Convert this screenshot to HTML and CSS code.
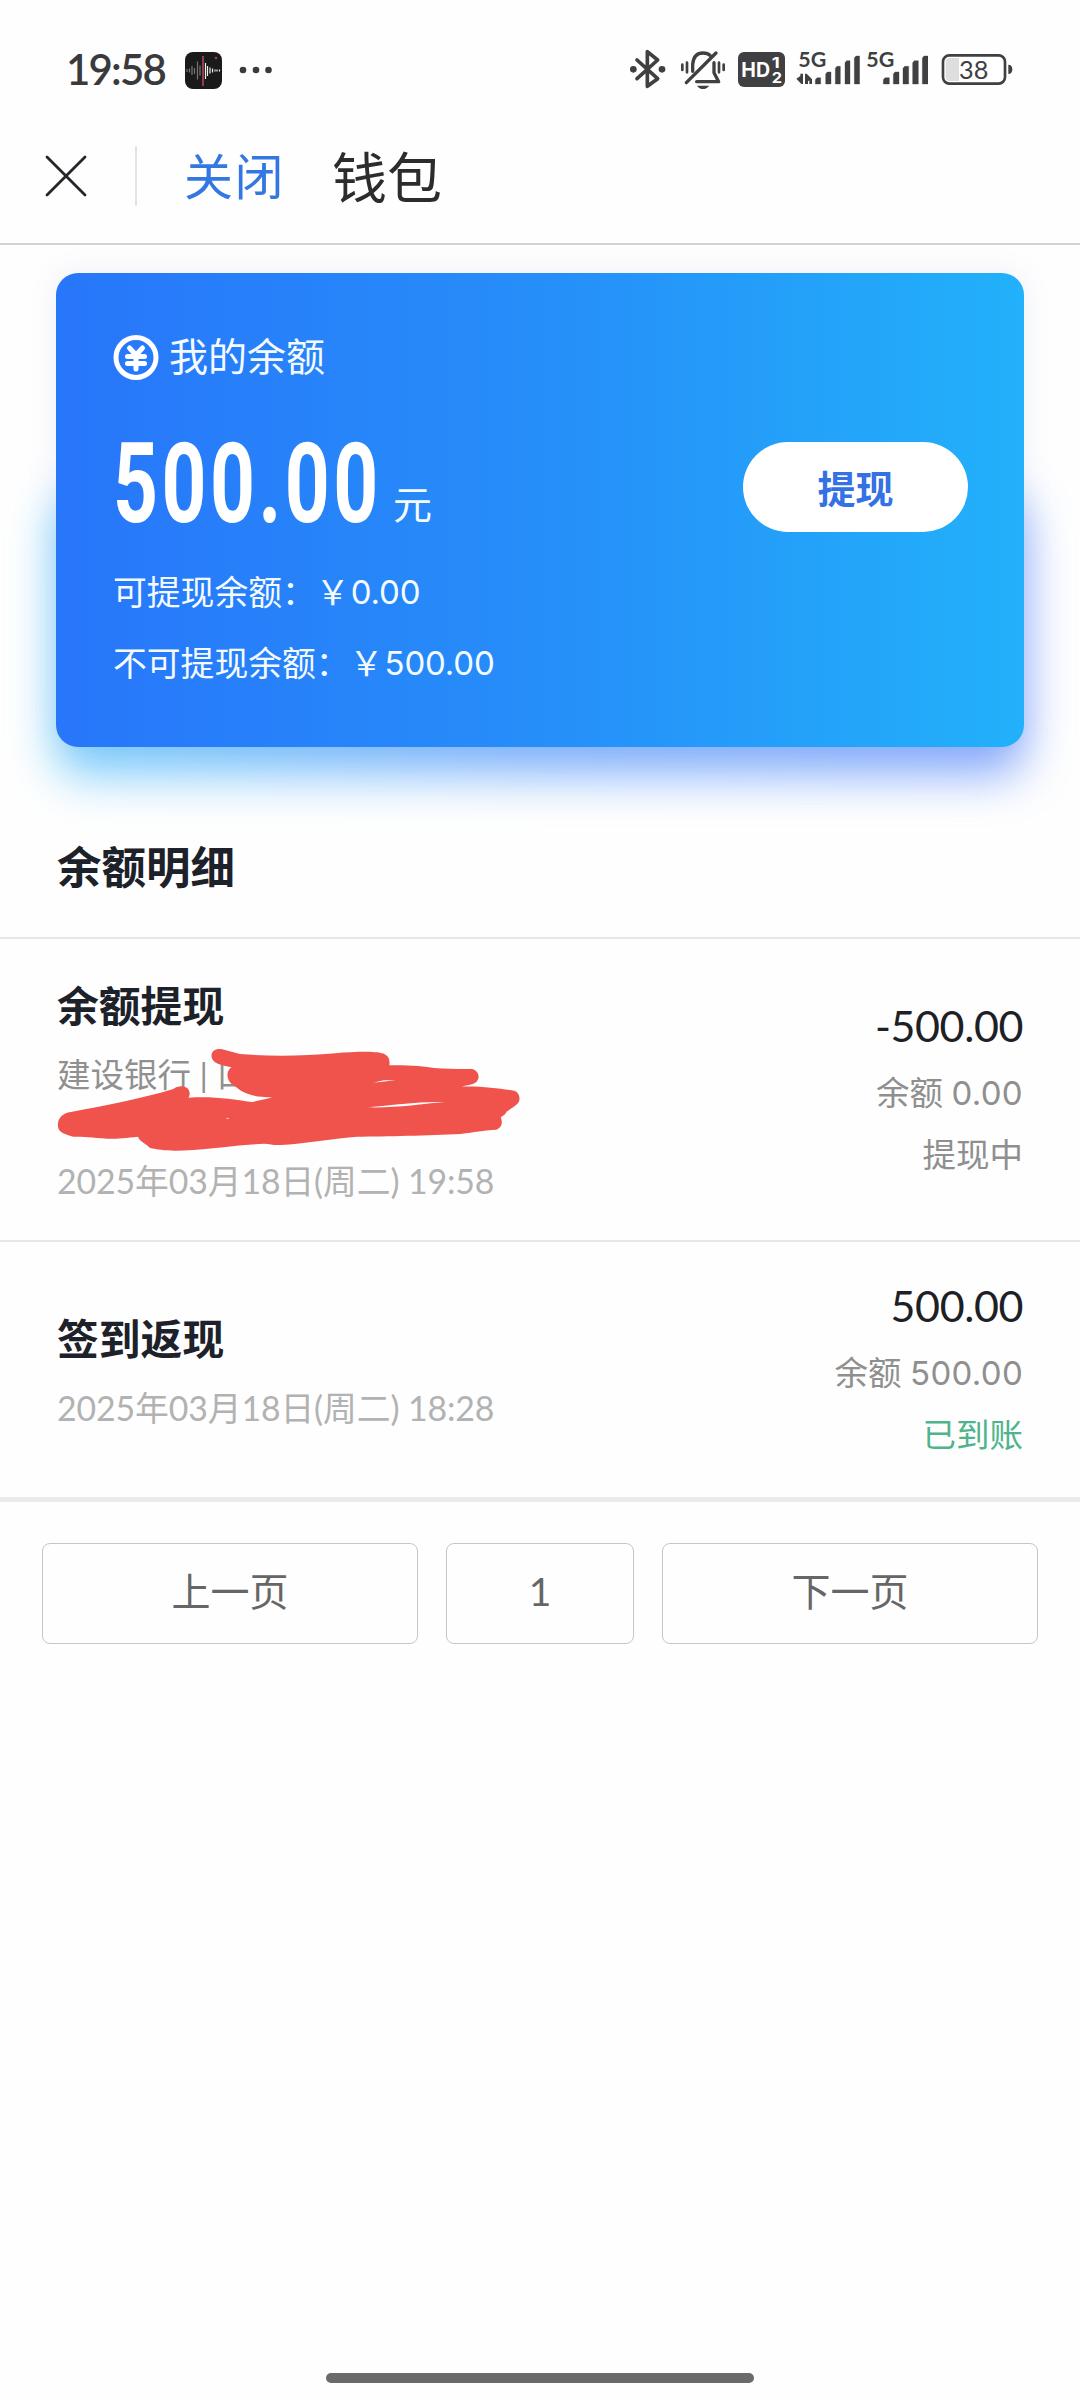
FILE: index.html
```html
<!DOCTYPE html>
<html lang="zh-CN">
<head>
<meta charset="utf-8">
<title>钱包</title>
<link rel="stylesheet" href="styles.css">
</head>
<body>
<div class="page">
  <div class="status">
    <span class="time">19:58</span>
    <svg class="app" width="37" height="37" viewBox="0 0 37 37">
      <rect width="37" height="37" rx="8" fill="#1b1a1b"/>
      <path d="M2 17v3M4.500 16.500v4M7 14v9M9.500 16v6M12.500 9.500v18M15 13.500v10" stroke="#777" stroke-width="1.200"/>
      <path d="M20.500 11v16M22.500 14v10M25 15.500v6M27.500 16.500v4M30 17.500v2M32 17.500v2M34.500 17.500v2" stroke="#eee" stroke-width="1.200"/>
      <path d="M18 4v30" stroke="#d8506a" stroke-width="1.300"/>
      <circle cx="31" cy="6" r="1.300" fill="#a04050"/>
    </svg>
    <svg class="more" width="34" height="8" viewBox="0 0 34 8" fill="#3a3a3c"><circle cx="4" cy="4" r="3.300"/><circle cx="17" cy="4" r="3.300"/><circle cx="29.500" cy="4" r="3.300"/></svg>
    <div class="indicators">
      <svg width="40" height="80" viewBox="84 0 120 240" fill="none" stroke="#404042">
        <path d="M111 90L173 146L142 169V65L173 90L111 146" stroke-width="11" stroke-linejoin="round" stroke-linecap="round"/>
        <circle cx="100" cy="118" r="10" fill="#404042" stroke="none"/><circle cx="186" cy="118" r="10" fill="#404042" stroke="none"/>
      </svg>
      <svg class="g12" width="46" height="80" viewBox="240 0 138 240" fill="none" stroke="#404042" stroke-width="10" stroke-linecap="round">
        <path d="M278 124V103C280 80 291 69 309 69C319 69 326 72 331 77M342 98V128L356 155H290" stroke-linejoin="round"/>
        <path d="M259 158L348 69"/>
        <path d="M247 104V120M261 98V127M357 98V127M371 104V120" stroke-width="8"/>
        <path d="M291 167H328C322 174 316 177 309 177C302 177 296 174 291 167Z" fill="#404042" stroke="none"/>
      </svg>
      <svg class="g12" width="47" height="80" viewBox="414 0 141 240">
        <rect x="414" y="66" width="141" height="105" rx="18" fill="#404042"/>
        <g fill="#fff" font-family="Inter, sans-serif" font-weight="700">
          <text x="424" y="140" font-size="60" textLength="86" lengthAdjust="spacingAndGlyphs">HD</text>
          <text x="515" y="114" font-size="45" textLength="24" lengthAdjust="spacingAndGlyphs">1</text>
          <text x="515" y="158" font-size="45" textLength="31" lengthAdjust="spacingAndGlyphs">2</text>
        </g>
      </svg>
      <svg class="g11" width="64" height="80" viewBox="588 0 192 240" fill="#404042">
        <text x="595" y="110" font-size="61" font-family="Lato, sans-serif" font-weight="700" textLength="84" lengthAdjust="spacingAndGlyphs">5G</text>
        <path d="M589 146L601 138V131H609V162H604ZM615 131H620L635 146L624 154V162H615ZM628 147H636V162H628Z"/>
        <path d="M646 162V149L651 143H662V162ZM677 162V132L682 126H693V162ZM706 162V115L711 109H721V162ZM735 162V98L740 92H750V162ZM763 162V84L768 78H779V162Z" stroke="#404042" stroke-width="1" stroke-linejoin="round"/>
      </svg>
      <svg class="g6" width="62" height="80" viewBox="798 0 186 240" fill="#404042">
        <text x="799" y="110" font-size="61" font-family="Lato, sans-serif" font-weight="700" textLength="84" lengthAdjust="spacingAndGlyphs">5G</text>
        <path d="M850 162V149L855 143H868V162ZM880 162V132L885 126H897V162ZM909 162V115L914 109H926V162ZM938 162V98L943 92H955V162ZM967 162V84L972 78H984V162Z" stroke="#404042" stroke-width="1" stroke-linejoin="round"/>
      </svg>
      <svg class="g13" width="72" height="80" viewBox="1024 0 216 240">
        <rect x="1030" y="76" width="186" height="85" rx="19" fill="#fff" stroke="#404042" stroke-width="8"/>
        <path d="M1050 84H1078V153H1050Q1038 153 1038 141V96Q1038 84 1050 84Z" fill="#dedede"/>
        <path d="M1226 104Q1238 104 1238 118Q1238 132 1226 132Z" fill="#404042"/>
        <text x="1078" y="146" font-size="74" fill="#404042" font-family="Lato, sans-serif" textLength="88" lengthAdjust="spacingAndGlyphs">38</text>
      </svg>
    </div>
  </div>

  <header class="bar">
    <svg class="close" width="42" height="42" viewBox="0 0 42 42" stroke="#222529" stroke-width="2.800" stroke-linecap="round"><path d="M2 2L40 40M40 2L2 40"/></svg>
    <span class="sep"></span>
    <span class="shut">关闭</span>
    <h1 class="title">钱包</h1>
  </header>

  <section class="wallet">
    <div class="card">
      <div class="label">
        <svg width="46" height="46" viewBox="0 0 46 46" fill="none" stroke="#fff" stroke-linecap="round"><circle cx="23" cy="22.500" r="20" stroke-width="5"/><path d="M16.500 13L23 20L29.500 13M14.500 21.500H31.500M14.500 28.500H31.500M23 21V34" stroke-width="5"/></svg>
        <span>我的余额</span>
      </div>
      <div class="main">
        <span class="sum">500.00</span>
        <span class="unit">元</span>
        <button class="draw">提现</button>
      </div>
      <div class="part"><span>可提现余额：</span><span class="yen">￥</span><b>0.00</b></div>
      <div class="part"><span>不可提现余额：</span><span class="yen">￥</span><b>500.00</b></div>
    </div>
  </section>

  <h2 class="heading">余额明细</h2>

  <div class="row first">
    <div class="left">
      <div class="name">余额提现</div>
      <div class="bank">建设银行 | 口<br>´</div>
      <div class="date">2025年03月18日(周二) 19:58</div>
    </div>
    <div class="right">
      <div class="amount">-500.00</div>
      <div class="rest">余额 <b>0.00</b></div>
      <div class="state">提现中</div>
    </div>
    <svg class="scribble" width="560" height="320" viewBox="0 0 1568 960" preserveAspectRatio="none">
      <path fill="#f0524c" d="M592 348C592 330 610 322 630 330L672 342C760 350 850 348 940 340C1000 334 1050 334 1070 340C1088 345 1093 360 1090 376C1130 374 1190 378 1215 384C1250 386 1290 388 1322 387C1342 392 1345 415 1333 427C1322 435 1305 437 1292 440C1350 438 1400 446 1440 452C1456 458 1458 480 1450 490C1442 500 1425 510 1418 515C1416 524 1406 528 1402 532C1408 545 1406 562 1390 569C1350 571 1330 576 1290 582C1200 586 1080 590 1000 590C940 594 850 612 785 615C765 616 755 612 740 611C650 616 560 632 490 632C460 632 440 628 420 624C410 612 385 600 387 590C350 594 320 597 300 596C260 592 230 590 205 590C180 582 162 578 162 555C162 535 175 520 195 517C300 495 400 475 485 447C500 436 515 436 525 445C533 455 532 465 528 473C600 468 650 478 705 486C725 482 745 478 762 472C700 470 680 460 655 436C635 425 630 395 648 382C620 375 594 372 592 348Z"/>
      <path fill="#fff" d="M1045 428L1074 421L1108 421ZM1030 502C1100 495 1170 484 1245 486C1180 492 1110 504 1030 502ZM632 535L638 533L642 537Z"/>
    </svg>
  </div>

  <div class="row second">
    <div class="left">
      <div class="name">签到返现</div>
      <div class="date">2025年03月18日(周二) 18:28</div>
    </div>
    <div class="right">
      <div class="amount">500.00</div>
      <div class="rest">余额 <b>500.00</b></div>
      <div class="state done">已到账</div>
    </div>
  </div>

  <nav class="pager">
    <button class="wide">上一页</button>
    <button class="num">1</button>
    <button class="wide">下一页</button>
  </nav>
  <div class="home"></div>
</div>
</body>
</html>
```
FILE: styles.css
```css
* { box-sizing: border-box; }
body { margin: 0; background: #fefefe; }
.page {
  width: 1080px; height: 2400px; overflow: hidden;
  display: flex; flex-direction: column;
  font-family: Lato, "Noto Sans CJK SC", sans-serif;
  color: #1d2129;
}
h1, h2 { margin: 0; font-weight: 400; }
b { font-weight: 400; }
button { font: inherit; padding: 0; margin: 0; }
svg { display: block; flex: none; }

.status { height: 120px; padding: 0 67px 0 66px; display: flex; align-items: flex-start; }
.time { width: 119px; margin-top: 29px; font-size: 42px; line-height: 80px; font-weight: 600; color: #3a3a3c; letter-spacing: -1.8px; }
.app { margin-top: 52px; }
.more { margin: 66px 0 0 17px; }
.indicators { display: flex; margin: 30px 0 0 auto; }
.g12 { margin-left: 12px; }
.g11 { margin-left: 11px; }
.g6 { margin-left: 6px; }
.g13 { margin-left: 13px; }

.bar {
  height: 125px; padding: 0 45px 11px; display: flex; align-items: center;
  border-bottom: 2px solid #d2d2d2;
  font-family: "Noto Sans CJK SC", sans-serif;
}
.sep { width: 2px; height: 60px; margin-left: 48px; background: #e2e2e2; }
.shut { margin-left: 47px; padding-bottom: 5px; font-size: 49px; line-height: 80px; letter-spacing: 1.5px; color: #3377e2; }
.title { margin-left: 47px; padding-bottom: 5px; font-size: 55px; line-height: 80px; color: #2c2c2e; }

.wallet { padding: 28px 56px 0; isolation: isolate; }
.card {
  position: relative; height: 474px; padding: 62px 56px 0 57px; border-radius: 22px;
  background: linear-gradient(90deg, #2876fa 0%, #268ef9 50%, #22b1fa 100%);
  color: #f4fbff;
  box-shadow: 0 0 30px rgba(90, 110, 200, .1);
}
.card::before {
  content: ""; position: absolute; z-index: -1; left: 0; right: 0; top: 225px; bottom: -28px;
  border-radius: 24px; filter: blur(24px);
  background: linear-gradient(90deg, #35b6fb, #3f8dfb 50%, #4a7ffb); opacity: .66;
}
.label { display: flex; align-items: center; gap: 10px; height: 46px; font-size: 39px; line-height: 46px; }
.label span { padding-bottom: 4px; }
.main { display: flex; height: 90px; margin: 61px 0 25px; }
.sum {
  width: 280px; margin-top: -3px; font: 700 112px/90px Roboto, sans-serif; letter-spacing: 5px; color: #fff;
  transform: scaleX(.7); transform-origin: 0 0;
}
.unit { font-size: 39px; line-height: 60px; margin-top: 32px; }
.draw {
  margin-left: auto; width: 225px; height: 90px; border: 0; border-radius: 45px; background: #fff;
  font: 700 38px/88px "Noto Sans CJK SC", sans-serif; color: #3371e5;
}
.part { display: flex; height: 70.5px; font-size: 33.800px; line-height: 71px; }
.part b { font-family: Inter, sans-serif; font-size: 33px; letter-spacing: -.2px; }
.yen { width: 35px; }

.heading { height: 192px; padding: 85px 57px 0; border-bottom: 2px solid #e7e7e7; font-size: 44.500px; line-height: 70px; font-weight: 700; }

.row { position: relative; display: flex; justify-content: space-between; padding: 0 57px; }
.first { height: 303px; border-bottom: 2px solid #e7e7e7; }
.second { height: 260px; border-bottom: 5px solid #ebebeb; }
.first .left { padding-top: 37px; }
.second .left { padding-top: 67px; }
.first .right { padding-top: 54px; }
.second .right { padding-top: 31px; }
.name { margin-bottom: 11px; font-size: 41.800px; line-height: 60px; font-weight: 700; }
.bank { font-size: 33.500px; line-height: 54px; color: #909090; }
.date { font-size: 33.800px; line-height: 54px; letter-spacing: -.1px; color: #b2b2b2; }
.first .date { margin-top: -1px; }
.second .date { margin-top: 12px; }
.right { text-align: right; color: #8f8f8f; font-size: 33.500px; line-height: 57px; }
.amount { font-size: 43px; line-height: 66px; letter-spacing: -.4px; color: #1d2024; }
.rest { line-height: 66px; }
.rest b { font-family: Inter, sans-serif; font-size: 33px; letter-spacing: .3px; }
.done { color: #4fb48b; }
.scribble { position: absolute; left: 0; top: 1px; }

.pager { display: flex; gap: 28px; padding: 41px 42px 0; }
.pager button {
  height: 101px; padding-bottom: 5px; background: transparent; border: 1px solid #c6c6c6; border-radius: 8px;
  font-size: 39px; line-height: 94px; color: #666;
}
.pager .wide { width: 376px; }
.pager .num { width: 188px; }

.home { width: 428px; height: 10px; border-radius: 5px; background: #6a6a6a; margin: auto auto 17px; }
```
